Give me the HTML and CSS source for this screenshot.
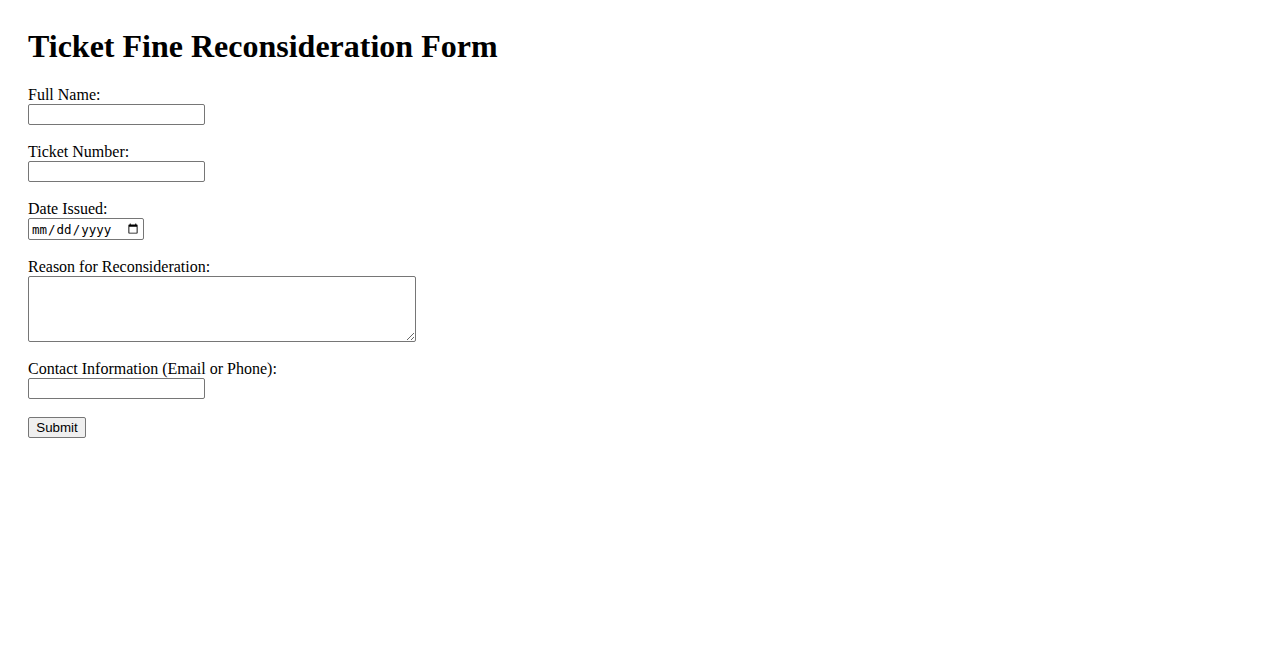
FILE: index.html
```html
<!DOCTYPE html>
<html lang="en">
<head>
    <meta charset="UTF-8">
    <meta name="viewport" content="width=device-width, initial-scale=1.0">
    <title>Ticket Fine Reconsideration Form</title>
    <link rel="stylesheet" href="styles.css">
</head>
<body>

    <div class="page">
        <h1>Ticket Fine Reconsideration Form</h1>

        <form class="ticket-form" onsubmit="return false;">
            <label for="full-name">Full Name:</label><br>
            <input type="text" id="full-name" class="text-input"><br><br>

            <label for="ticket-number">Ticket Number:</label><br>
            <input type="text" id="ticket-number" class="text-input"><br><br>

            <label for="date-issued">Date Issued:</label><br>
            <input type="date" id="date-issued" class="date-input"><br><br>

            <label for="reason">Reason for Reconsideration:</label><br>
            <textarea id="reason" class="reason-input"></textarea><br><br>

            <label for="contact">Contact Information (Email or Phone):</label><br>
            <input type="text" id="contact" class="text-input"><br><br>

            <button type="submit" class="submit-btn">Submit</button>
        </form>
    </div>

</body>
</html>
```

FILE: styles.css
```css
/* Global */
body {
    margin: 8px;
    font-family: "Liberation Serif", "Times New Roman", serif;
    font-size: 16px;
    color: #000;
    background-color: #fff;
}

.page {
    padding: 20px;
}

h1 {
    margin: 0 0 21px;
    font-size: 32px;
    font-weight: bold;
}

/* Form controls */
.text-input,
.date-input,
.reason-input {
    box-sizing: border-box;
    border: 1px solid #767676;
    border-radius: 2px;
    background-color: #fff;
    padding: 1px 2px;
}

.text-input {
    width: 177px;
    height: 21px;
    font-family: "Liberation Sans", Arial, sans-serif;
    font-size: 13.33px;
}

.date-input {
    width: 116px;
    height: 22px;
    font-family: "DejaVu Sans Mono", "Liberation Mono", monospace;
    font-size: 12.5px;
    color: #000;
}

.reason-input {
    width: 388px;
    height: 66px;
    vertical-align: bottom;
    font-family: "Liberation Mono", monospace;
    font-size: 13.33px;
}

.submit-btn {
    box-sizing: border-box;
    width: 58px;
    height: 21px;
    padding: 0;
    font-family: "Liberation Sans", Arial, sans-serif;
    font-size: 13.33px;
    color: #000;
    background-color: #efefef;
    border: 1px solid #767676;
    border-radius: 2px;
}
```
